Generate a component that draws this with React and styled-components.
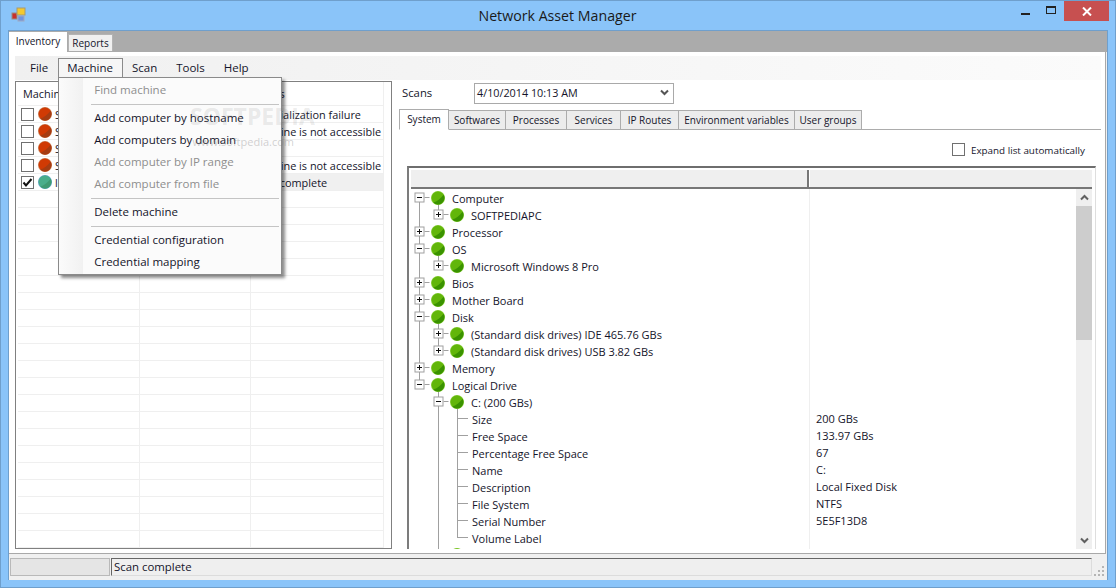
import React from "react";
import styled, { createGlobalStyle } from "styled-components";

const Global = createGlobalStyle`
  html, body { margin: 0; padding: 0; background: #8ac4f9; }
  body { font-family: "Open Sans", "Liberation Sans", sans-serif; font-size: 11px; color: #14142a; }
  * { box-sizing: border-box; }
`;

const Window = styled.div`
  position: relative; width: 1116px; height: 588px; background: #8ac4f9;
  border: 1px solid #6f9fcc; display: flex; flex-direction: column; overflow: hidden;
`;
const TitleBar = styled.div`
  height: 29px; flex: none; display: flex; align-items: flex-start; padding-left: 10px;
`;
const AppIcon = styled.svg`width: 16px; height: 16px; margin-top: 6px; flex: none;`;
const Title = styled.div`
  flex: 1; text-align: center; font-size: 14.2px; line-height: 30px; color: #1a1a1a; padding-left: 76px;
`;
const Controls = styled.div`display: flex; align-items: flex-start; margin-right: 6px;`;
const Ctrl = styled.div`
  width: 26px; height: 19px; display: flex; align-items: center; justify-content: center;
`;
const CloseBtn = styled.div`
  width: 45px; height: 20px; background: #c75050; display: flex; align-items: center; justify-content: center;
`;
const Client = styled.div`
  flex: none; width: 1100px; height: 550px; margin-left: 7px; border: 1px solid #6f9fcc; border-bottom: 0;
  background: #f0f0f0; display: flex; flex-direction: column;
`;
const TabStrip = styled.div`
  height: 21px; flex: none; background: #ababab; display: flex; align-items: flex-start; padding-top: 1px;
`;
const TopTab = styled.div`
  width: ${p => (p.$active ? "58px" : "45px")};
  height: ${p => (p.$active ? "20px" : "17px")}; margin-top: ${p => (p.$active ? "0" : "2px")};
  margin-left: ${p => (p.$active ? "0" : "1px")}; text-align: center;
  background: ${p => (p.$active ? "#fff" : "#f0f0f0")};
  line-height: ${p => (p.$active ? "18px" : "17px")}; border: ${p => (p.$active ? "0" : "1px solid #b4b4b4")};
  border-bottom: 0; font-size: 10px; color: #14142a;
`;
const TabPage = styled.div`
  flex: none; height: 502px; width: 1097px; background: #fff;
  border-right: 1px solid #a9a9a9; border-bottom: 1px solid #a9a9a9;
  padding: 4px 4px 0 6px; display: flex; flex-direction: column;
`;
const MenuBar = styled.div`
  height: 24px; flex: none; padding-left: 6px; padding-top: 2px; display: flex; align-items: flex-start;
  background: linear-gradient(to right, #f0f0f0, #fbfbfb);
`;
const MenuItem = styled.div`
  position: relative; height: 20px; padding: 0 9px 0 8px; line-height: 18px; font-size: 11.5px; color: #14142a;
  border: 1px solid ${p => (p.$open ? "#8a8a8a" : "transparent")}; border-bottom: 0;
  background: ${p => (p.$open ? "#f6f6f6" : "transparent")};
  z-index: ${p => (p.$open ? 5 : 1)};
`;
const Dropdown = styled.div`
  position: absolute; left: -1px; top: 18px; width: 224px; height: 198px; z-index: -1; padding: 1px 1px 0;
  border: 1px solid #8a8a8a; box-shadow: 3px 3px 3px rgba(0,0,0,.45);
  background: linear-gradient(to right, #fbfbfb, #f1f1f1) 0 0 / 24px 100% no-repeat, #fbfbfb;
`;
const DropItem = styled.div`
  height: 22px; line-height: 21px; padding-left: 34px; font-size: 11.5px; white-space: nowrap;
  color: ${p => (p.$disabled ? "#8e8e8e" : "#14142a")};
`;
const Sep = styled.div`
  height: 6px; margin-left: 31px; margin-right: 1px; display: flex; align-items: center;
  &::after { content: ""; flex: 1; height: 1px; background: #c4c4c4; }
`;
const Work = styled.div`flex: 1; min-height: 0; display: flex; margin-top: 1px;`;
const ListPanel = styled.div`
  width: 377px; height: 468px; flex: none; border: 1px solid #808080; padding-left: 2px; overflow: hidden; background: #fff;
`;
const ListRow = styled.div`
  display: grid; grid-template-columns: 122px 111px 133px; height: 17px;
  &:first-child { height: 24px; }
`;
const ListCell = styled.div`
  display: flex; align-items: center; min-width: 0; overflow: hidden; white-space: nowrap; padding-left: ${p => p.$pad ?? 2}px;
  border-right: 1px solid #efefef; border-bottom: 1px solid #efefef;
  background: ${p => (p.$sel ? "#f0f0f0" : "#fff")}; font-size: 10.9px; color: #14142a;
`;
const CheckBox = styled.div`
  width: 13px; height: 13px; flex: none; border: 1px solid #707070; background: #fff; display: flex; align-items: center; justify-content: center;
`;
const RowCheck = styled(CheckBox)`margin-left: 3px; margin-right: 4px;`;
const RowOrb = styled.svg`width: 14px; height: 14px; flex: none; margin-right: 3px;`;
const Right = styled.div`flex: 1; min-width: 0; height: 468px; padding-left: 7px; display: flex; flex-direction: column;`;
const ScanRow = styled.div`height: 21px; margin-top: 2px; flex: none; display: flex; align-items: center; padding-left: 3px;`;
const ScanLabel = styled.div`width: 72px; font-size: 11.3px; margin-top: -2px;`;
const Combo = styled.div`
  width: 200px; height: 21px; border: 1px solid #a9a9a9; background: #fff; display: flex; align-items: center;
  justify-content: space-between; padding: 0 4px 2px 2px; font-size: 10.8px;
`;
const TabsRow = styled.div`
  height: 21px; margin-top: 5px; flex: none; display: flex; align-items: flex-end; border-bottom: 1px solid #acacac;
`;
const SubTab = styled.div`
  width: ${p => p.$w}px; height: ${p => (p.$active ? "21px" : "19px")}; flex: none; text-align: center;
  background: ${p => (p.$active ? "#fff" : "#ececec")}; border: 1px solid #acacac; border-left: ${p => (p.$active ? "1px solid #acacac" : "0")};
  border-bottom: ${p => (p.$active ? "1px solid #fff" : "0")}; margin-bottom: ${p => (p.$active ? "-1px" : "0")};
  line-height: 18px; font-size: 10px; color: #14142a; white-space: nowrap;
`;
const ExpandRow = styled.div`
  height: 36px; flex: none; display: flex; align-items: center; justify-content: flex-end; padding: 3px 16px 0 0; gap: 6px; font-size: 9.85px;
`;
const TreePanel = styled.div`
  flex: 1; min-height: 0; margin-left: 8px; width: 689px; border-top: 2px solid #6e6e6e; border-left: 2px solid #7c7c7c;
  border-right: 1px solid #dedede; padding: 2px 0 0 2px; display: flex; flex-direction: column; overflow: hidden;
`;
const TreeHead = styled.div`
  height: 19px; flex: none; display: grid; grid-template-columns: 398px 1fr; margin-right: 3px;
  background: #efefef; border-bottom: 2px solid #777;
`;
const HeadCell = styled.div`border-left: ${p => (p.$split ? "1px solid #fff" : "0")}; border-right: ${p => (p.$split ? "0" : "2px solid #777")};`;
const TreeBody = styled.div`flex: 1; min-height: 0; display: flex; overflow: hidden; padding-right: 3px;`;
const TreeRows = styled.div`flex: 1; min-width: 0; padding-top: 1px; background: linear-gradient(#efefef, #efefef) 398px 0 / 1px 100% no-repeat;`;
const TreeRow = styled.div`
  height: 17px; flex: none; display: grid; grid-template-columns: 398px 1fr; font-size: 11px; line-height: 17px; color: #14142a;
`;
const NameCell = styled.div`display: flex; align-items: flex-start; white-space: nowrap;`;
const NameText = styled.span`line-height: 18px;`;
const ValueCell = styled.div`padding-left: 7px; line-height: 16px;`;
const Gutter = styled.svg`height: 17px; flex: none; display: block;`;
const ScrollBar = styled.div`width: 16px; flex: none; background: #efefef; display: flex; flex-direction: column;`;
const ScrollBtn = styled.div`height: 17px; flex: none; display: flex; align-items: center; justify-content: center;`;
const ScrollThumb = styled.div`height: 134px; flex: none; background: #cdcdcd;`;
const ScrollTrack = styled.div`flex: 1;`;
const StatusBar = styled.div`
  flex: 1; min-height: 0; display: flex; align-items: flex-start; padding: 4px 0 0 1px;
`;
const StatusIdle = styled.div`
  width: 100px; height: 18px; flex: none; background: #e5e5e5; border: 1px solid #b9b9b9;
`;
const StatusText = styled.div`
  width: 981px; height: 18px; flex: none; margin-left: 1px; padding-left: 2px; line-height: 16px; font-size: 11.4px; background: #efefef;
  border-top: 1px solid #666; border-left: 1px solid #666; border-right: 1px solid #dcdcdc; border-bottom: 1px solid #dcdcdc;
`;
const Grip = styled.svg`width: 11px; height: 11px; flex: none; margin: 8px 0 0 2px;`;
const WaterMark = styled.div`
  position: absolute; left: 189px; top: 102px; z-index: 9; pointer-events: none; color: rgba(120,120,120,.15);
  font-size: 23px; font-weight: 700; line-height: 26px;
`;
const WaterSub = styled.div`
  position: absolute; left: 190px; top: 133px; z-index: 9; pointer-events: none; color: rgba(120,120,120,.35); font-size: 11px; width: 103px; text-align: right;
`;

const Orb = ({ kind = "green", cx = 7, cy = 7 }) => {
  const c = {
    green: ["#62b60a", "#3a9200", "#8dd040"],
    red: ["#d03a04", "#a53c12", "#c98a62"],
    teal: ["#49ad8a", "#3f9a72", "#5fa6c8"],
  }[kind];
  return (
    <g transform={`translate(${cx - 7} ${cy - 7})`}>
      <circle cx="7" cy="7" r="7" fill={c[2]} />
      <circle cx="7" cy="7" r="6.4" fill={c[0]} />
      <path d="M12.6 3.8 A6.4 6.4 0 0 1 2.4 11.4 C6 10.6 9.5 8 12.6 3.8 Z" fill={c[1]} />
    </g>
  );
};

const Check = () => (
  <svg width="11" height="11" viewBox="0 0 11 11"><path d="M1.5 5.5 L4 8.5 L9.5 2" fill="none" stroke="#111" strokeWidth="2" /></svg>
);

const G0 = 8, G1 = 27, G2 = 46;
const LINE = "#a0a0a0";

const Exp = ({ x, open }) => (
  <g>
    <line x1={x + 5} x2={x + 10} y1="7.5" y2="7.5" stroke={LINE} />
    <rect x={x - 4.5} y="3" width="9" height="9" fill="#fff" stroke="#a0a0a0" />
    <line x1={x - 2.5} x2={x + 2.5} y1="7.5" y2="7.5" stroke="#111" />
    {!open && <line x1={x} x2={x} y1="5" y2="10" stroke="#111" />}
  </g>
);

const V = ({ x, mode }) => {
  const ax = x + 0.5;
  if (mode === "full") return <line x1={ax} x2={ax} y1="0" y2="17" stroke={LINE} />;
  if (mode === "top") return <line x1={ax} x2={ax} y1="0" y2="8" stroke={LINE} />;
  return <line x1={ax} x2={ax} y1="8" y2="17" stroke={LINE} />;
};

const rows = [
  { t: "Computer", d: 0, exp: "-", g: { [G0]: "bottom", [G1]: "bottom" } },
  { t: "SOFTPEDIAPC", d: 1, exp: "+", g: { [G0]: "full", [G1]: "top" } },
  { t: "Processor", d: 0, exp: "+", g: { [G0]: "full" } },
  { t: "OS", d: 0, exp: "-", g: { [G0]: "full", [G1]: "bottom" } },
  { t: "Microsoft Windows 8 Pro", d: 1, exp: "+", g: { [G0]: "full", [G1]: "top" } },
  { t: "Bios", d: 0, exp: "+", g: { [G0]: "full" } },
  { t: "Mother Board", d: 0, exp: "+", g: { [G0]: "full" } },
  { t: "Disk", d: 0, exp: "-", g: { [G0]: "full", [G1]: "bottom" } },
  { t: "(Standard disk drives) IDE 465.76 GBs", d: 1, exp: "+", g: { [G0]: "full", [G1]: "full" } },
  { t: "(Standard disk drives) USB 3.82 GBs", d: 1, exp: "+", g: { [G0]: "full", [G1]: "top" } },
  { t: "Memory", d: 0, exp: "+", g: { [G0]: "full" } },
  { t: "Logical Drive", d: 0, exp: "-", g: { [G0]: "top", [G1]: "bottom" } },
  { t: "C: (200 GBs)", d: 1, exp: "-", g: { [G1]: "full", [G2]: "bottom" } },
  { t: "Size", v: "200 GBs", d: 2, g: { [G1]: "full", [G2]: "full" } },
  { t: "Free Space", v: "133.97 GBs", d: 2, g: { [G1]: "full", [G2]: "full" } },
  { t: "Percentage Free Space", v: "67", d: 2, g: { [G1]: "full", [G2]: "full" } },
  { t: "Name", v: "C:", d: 2, g: { [G1]: "full", [G2]: "full" } },
  { t: "Description", v: "Local Fixed Disk", d: 2, g: { [G1]: "full", [G2]: "full" } },
  { t: "File System", v: "NTFS", d: 2, g: { [G1]: "full", [G2]: "full" } },
  { t: "Serial Number", v: "5E5F13D8", d: 2, g: { [G1]: "full", [G2]: "full" } },
  { t: "Volume Label", d: 2, g: { [G1]: "full", [G2]: "top" } },
  { t: "", d: 1, exp: "", g: { [G1]: "full" } },
];

const offset = [41, 60, 61];

const Row = ({ r }) => {
  const w = offset[r.d];
  return (
    <TreeRow>
      <NameCell>
        <Gutter width={w} viewBox={`0 0 ${w} 17`}>
          {Object.entries(r.g).map(([x, m]) => <V key={x} x={+x} mode={m} />)}
          {r.d === 2 && <line x1={G2} x2={G2 + 11} y1="7.5" y2="7.5" stroke={LINE} />}
          {r.exp === "+" || r.exp === "-" ? <Exp x={r.d === 0 ? G0 + 0.5 : G1 + 0.5} open={r.exp === "-"} /> : null}
          {r.d < 2 && <Orb cx={r.d === 0 ? 27 : 46} cy={8} />}
        </Gutter>
        <NameText>{r.t}</NameText>
      </NameCell>
      <ValueCell>{r.v}</ValueCell>
    </TreeRow>
  );
};

const machines = [
  { kind: "red", name: "SOFTPEDIA-01", status: "Initialization failure", pad: 13 },
  { kind: "red", name: "SOFTPEDIA-02", status: "Machine is not accessible" },
  { kind: "red", name: "SOFTPEDIA-03", status: "" },
  { kind: "red", name: "SOFTPEDIA-04", status: "Machine is not accessible" },
  { kind: "teal", name: "localhost", status: "Scan complete", checked: true, sel: true },
];

const emptyRows = Array.from({ length: 21 });

const subTabs = [
  ["System", 50, true], ["Softwares", 57], ["Processes", 61], ["Services", 54],
  ["IP Routes", 58], ["Environment variables", 116], ["User groups", 67],
];

export default function App() {
  return (
    <>
      <Global />
      <Window>
        <TitleBar>
          <AppIcon viewBox="0 0 16 16">
            <rect x="1" y="6" width="5" height="6" fill="#c8302c" stroke="#9c8a80" />
            <rect x="6" y="1" width="8" height="7" fill="#f4c92e" stroke="#a89a70" />
            <rect x="7" y="9" width="6" height="5" fill="#6f94e0" stroke="#a0a8c0" />
          </AppIcon>
          <Title>Network Asset Manager</Title>
          <Controls>
            <Ctrl><svg width="9" height="10" viewBox="0 0 9 10"><rect x="0" y="7" width="9" height="2" fill="#222" /></svg></Ctrl>
            <Ctrl><svg width="11" height="9" viewBox="0 0 11 9"><rect x=".5" y=".5" width="9" height="7" fill="none" stroke="#222" /><rect x="0" y="0" width="10" height="2" fill="#222" /></svg></Ctrl>
            <CloseBtn><svg width="10" height="9" viewBox="0 0 10 9"><path d="M1 .5 L9 8.5 M9 .5 L1 8.5" stroke="#fff" strokeWidth="2" /></svg></CloseBtn>
          </Controls>
        </TitleBar>
        <Client>
          <TabStrip>
            <TopTab $active>Inventory</TopTab>
            <TopTab>Reports</TopTab>
          </TabStrip>
          <TabPage>
            <MenuBar>
              <MenuItem>File</MenuItem>
              <MenuItem $open>
                Machine
                <Dropdown>
                  <DropItem $disabled>Find machine</DropItem>
                  <Sep />
                  <DropItem>Add computer by hostname</DropItem>
                  <DropItem>Add computers by domain</DropItem>
                  <DropItem $disabled>Add computer by IP range</DropItem>
                  <DropItem $disabled>Add computer from file</DropItem>
                  <Sep />
                  <DropItem>Delete machine</DropItem>
                  <Sep />
                  <DropItem>Credential configuration</DropItem>
                  <DropItem>Credential mapping</DropItem>
                </Dropdown>
              </MenuItem>
              <MenuItem>Scan</MenuItem>
              <MenuItem>Tools</MenuItem>
              <MenuItem>Help</MenuItem>
            </MenuBar>
            <Work>
              <ListPanel>
                <ListRow>
                  <ListCell $pad={5}>Machine</ListCell>
                  <ListCell />
                  <ListCell>Status</ListCell>
                </ListRow>
                {machines.map(m => (
                  <ListRow key={m.name}>
                    <ListCell $pad={0}>
                      <RowCheck>{m.checked && <Check />}</RowCheck>
                      <RowOrb viewBox="0 0 14 14"><Orb kind={m.kind} /></RowOrb>
                      {m.name}
                    </ListCell>
                    <ListCell $sel={m.sel} />
                    <ListCell $sel={m.sel} $pad={m.pad}>{m.status}</ListCell>
                  </ListRow>
                ))}
                {emptyRows.map((_, i) => (
                  <ListRow key={i}><ListCell /><ListCell /><ListCell /></ListRow>
                ))}
              </ListPanel>
              <Right>
                <ScanRow>
                  <ScanLabel>Scans</ScanLabel>
                  <Combo>
                    4/10/2014 10:13 AM
                    <svg width="9" height="7" viewBox="0 0 9 7"><path d="M1 1.5 L4.5 5 L8 1.5" fill="none" stroke="#555" strokeWidth="2" /></svg>
                  </Combo>
                </ScanRow>
                <TabsRow>
                  {subTabs.map(([t, w, a]) => <SubTab key={t} $w={w} $active={a}>{t}</SubTab>)}
                </TabsRow>
                <ExpandRow>
                  <CheckBox />
                  Expand list automatically
                </ExpandRow>
                <TreePanel>
                  <TreeHead><HeadCell /><HeadCell $split /></TreeHead>
                  <TreeBody>
                    <TreeRows>
                      {rows.map((r, i) => <Row key={i} r={r} />)}
                    </TreeRows>
                    <ScrollBar>
                      <ScrollBtn><svg width="9" height="7" viewBox="0 0 9 7"><path d="M1 5.5 L4.5 2 L8 5.5" fill="none" stroke="#606060" strokeWidth="2" /></svg></ScrollBtn>
                      <ScrollThumb />
                      <ScrollTrack />
                      <ScrollBtn><svg width="9" height="7" viewBox="0 0 9 7"><path d="M1 1.5 L4.5 5 L8 1.5" fill="none" stroke="#606060" strokeWidth="2" /></svg></ScrollBtn>
                    </ScrollBar>
                  </TreeBody>
                </TreePanel>
              </Right>
            </Work>
          </TabPage>
          <StatusBar>
            <StatusIdle />
            <StatusText>Scan complete</StatusText>
            <Grip viewBox="0 0 11 11" fill="#b5b5b5">
              <rect x="8" y="0" width="2" height="2" /><rect x="4" y="4" width="2" height="2" /><rect x="8" y="4" width="2" height="2" />
              <rect x="0" y="8" width="2" height="2" /><rect x="4" y="8" width="2" height="2" /><rect x="8" y="8" width="2" height="2" />
            </Grip>
          </StatusBar>
        </Client>
        <WaterMark>SOFTPEDIA</WaterMark>
        <WaterSub>www.softpedia.com</WaterSub>
      </Window>
    </>
  );
}
